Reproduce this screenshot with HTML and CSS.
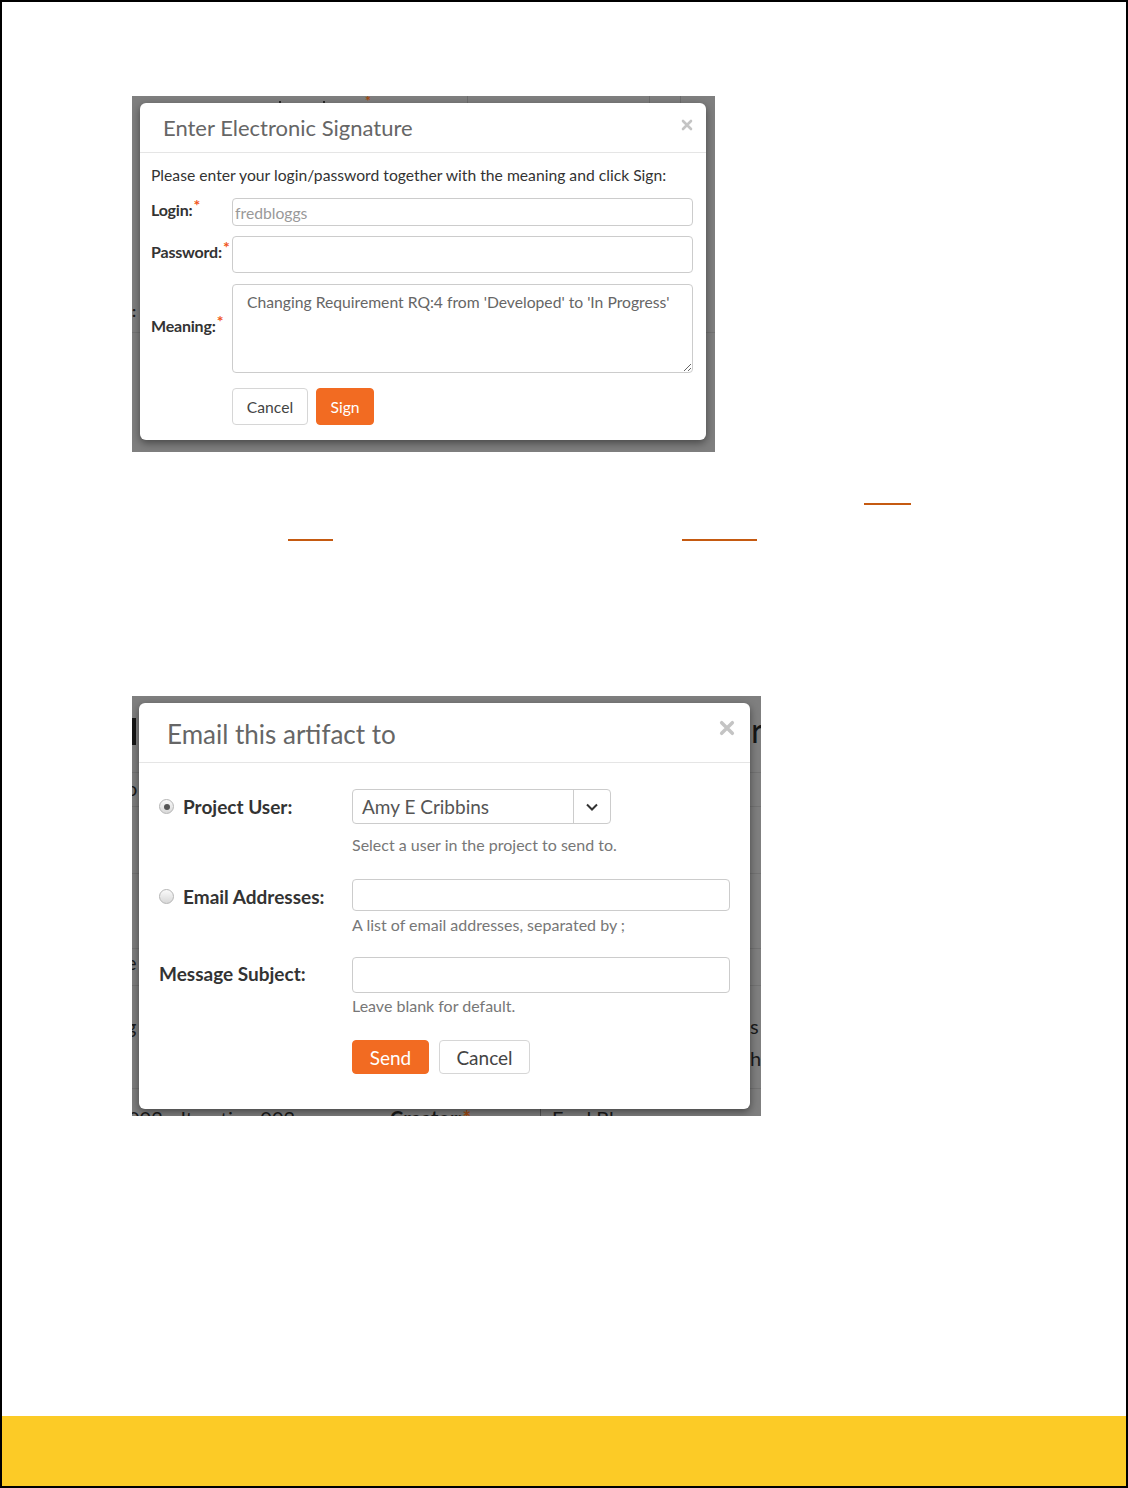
FILE: index.html
```html
<!DOCTYPE html>
<html lang="en">
<head>
  <meta charset="UTF-8">
  <meta name="viewport" content="width=device-width, initial-scale=1.0">
  <title>Electronic signature and email dialogs</title>
  <link rel="stylesheet" href="styles.css">
</head>
<body>
  <div class="page">
    <main class="content">

      <!-- screenshot 1: signature dialog -->
      <div class="shot shot-sig">
        <span class="bg-vline" style="left:335px"></span>
        <span class="bg-vline" style="left:517px"></span>
        <span class="bg-vline" style="left:548px"></span>
        <span class="bg-dot" style="left:147px"></span>
        <span class="bg-dot" style="left:191px"></span>
        <span class="bg-star" style="left:233px">*</span>
        <span class="bg-colon" style="top:205px">:</span>
        <span class="bg-hline" style="top:236px"></span>

        <div class="modal sig-modal">
          <div class="sig-head">
            <h3 class="sig-title">Enter Electronic Signature</h3>
            <svg class="close-x sig-close" viewBox="0 0 12 12"><path d="M2 2L10 10M10 2L2 10"/></svg>
          </div>
          <div class="sig-body">
            <p class="sig-intro">Please enter your login/password together with the meaning and click Sign:</p>
            <div class="sig-row">
              <label class="sig-label">Login:<sup class="req">*</sup></label>
              <input class="sig-input sig-login" type="text" placeholder="fredbloggs">
            </div>
            <div class="sig-row">
              <label class="sig-label">Password:<sup class="req">*</sup></label>
              <input class="sig-input sig-pass" type="password">
            </div>
            <div class="sig-row">
              <label class="sig-label">Meaning:<sup class="req">*</sup></label>
              <textarea class="sig-input sig-meaning">Changing Requirement RQ:4 from 'Developed' to 'In Progress'</textarea>
            </div>
            <div class="sig-actions">
              <button class="btn btn-default sig-btn">Cancel</button>
              <button class="btn btn-primary sig-btn sig-sign">Sign</button>
            </div>
          </div>
        </div>
      </div>

      <div class="rule-row rule-row-1">
        <span class="link-rule" style="margin-left:732px;width:47px"></span>
      </div>
      <div class="rule-row rule-row-2">
        <span class="link-rule" style="margin-left:156px;width:45px"></span>
        <span class="link-rule" style="margin-left:349px;width:75px"></span>
      </div>

      <!-- screenshot 2: email dialog -->
      <div class="shot shot-mail">
        <span class="bg-stem"></span>
        <span class="bg-big" style="left:619px">r</span>
        <span class="bg-hline" style="top:76px"></span>
        <span class="bg-hline" style="top:110px"></span>
        <span class="bg-hline" style="top:177px"></span>
        <span class="bg-hline" style="top:252px"></span>
        <span class="bg-hline" style="top:289px"></span>
        <span class="bg-hline" style="top:392px"></span>
        <span class="bg-side" style="left:-6px;top:80px">o</span>
        <span class="bg-side" style="left:-6px;top:254px">e</span>
        <span class="bg-side" style="left:-6px;top:318px">g</span>
        <span class="bg-side" style="left:618px;top:318px">s</span>
        <span class="bg-side" style="left:618px;top:350px">h</span>
        <span class="bg-foot" style="left:-4px">002 - Iteration 002</span>
        <span class="bg-foot bg-arrow" style="left:190px">&#9654;</span>
        <span class="bg-foot bg-creator" style="left:258px">Creator:<span class="bg-req">*</span></span>
        <span class="bg-sep" style="left:408px"></span>
        <span class="bg-foot" style="left:420px">Fred Bloggs</span>

        <div class="modal mail-modal">
          <div class="mail-head">
            <h3 class="mail-title">Email this artifact to</h3>
            <svg class="close-x mail-close" viewBox="0 0 12 12"><path d="M2 2L10 10M10 2L2 10"/></svg>
          </div>
          <div class="mail-body">
            <div class="mail-row mail-row-user">
              <label class="mail-label"><span class="radio radio-on"></span>Project User:</label>
              <div class="mail-field">
                <div class="select-box">
                  <span class="select-value">Amy E Cribbins</span>
                  <span class="select-caret">
                    <svg viewBox="0 0 14 10"><path d="M2 2.5L7 7.5L12 2.5"/></svg>
                  </span>
                </div>
                <p class="help help-user">Select a user in the project to send to.</p>
              </div>
            </div>
            <div class="mail-row mail-row-addr">
              <label class="mail-label"><span class="radio"></span>Email Addresses:</label>
              <div class="mail-field">
                <input class="mail-input mail-addr" type="text">
                <p class="help">A list of email addresses, separated by ;</p>
              </div>
            </div>
            <div class="mail-row mail-row-subj">
              <label class="mail-label">Message Subject:</label>
              <div class="mail-field">
                <input class="mail-input mail-subj" type="text">
                <p class="help">Leave blank for default.</p>
              </div>
            </div>
            <div class="mail-actions">
              <button class="btn btn-primary mail-send">Send</button>
              <button class="btn btn-default mail-cancel">Cancel</button>
            </div>
          </div>
        </div>
      </div>

    </main>
    <footer class="footer-bar"></footer>
  </div>
</body>
</html>
```

FILE: styles.css
```css
body {
  margin: 0;
  font-family: Lato, "Open Sans", sans-serif;
  background: #fff;
}
.page {
  width: 1128px;
  height: 1488px;
  box-sizing: border-box;
  border: 2px solid #000;
  display: flex;
  flex-direction: column;
}
.content {
  flex: 1;
  padding: 94px 0 0 130px;
}
.footer-bar {
  height: 70px;
  background: #fccb26;
}

/* screenshot frames with the dimmed page behind */
.shot {
  position: relative;
  overflow: hidden;
  background: #7f7f7f;
  box-sizing: border-box;
}
.shot-sig {
  width: 583px;
  height: 356px;
  padding: 7px 0 0 8px;
}
.shot-mail {
  width: 629px;
  height: 420px;
  padding: 7px 0 0 7px;
  margin-top: 155px;
}
.bg-vline {
  position: absolute;
  top: 0;
  width: 1px;
  height: 8px;
  background: #6e6e6e;
}
.bg-hline {
  position: absolute;
  left: 0;
  right: 0;
  height: 1px;
  background: #737373;
}
.bg-dot {
  position: absolute;
  top: 5px;
  width: 2px;
  height: 2px;
  background: #2a2a2a;
}
.bg-star {
  position: absolute;
  top: -4px;
  color: #a34a10;
  font-size: 14px;
  font-weight: 700;
}
.bg-colon {
  position: absolute;
  left: 0;
  color: #1a1a1a;
  font-size: 16px;
  font-weight: 700;
}
.bg-stem {
  position: absolute;
  left: 0;
  top: 22px;
  width: 4px;
  height: 27px;
  background: #161616;
}
.bg-big {
  position: absolute;
  top: 14px;
  color: #161616;
  font-size: 34px;
  line-height: 40px;
}
.bg-side {
  position: absolute;
  color: #1a1a1a;
  font-size: 20px;
  line-height: 24px;
}
.bg-foot {
  position: absolute;
  top: 410px;
  color: #1a1a1a;
  font-size: 20px;
  line-height: 24px;
  white-space: nowrap;
}
.bg-arrow { font-size: 11px; top: 416px; }
.bg-creator { font-weight: 700; }
.bg-req { color: #a34a10; }
.bg-sep {
  position: absolute;
  top: 410px;
  width: 1px;
  height: 24px;
  background: #555;
}

.modal {
  position: relative;
  z-index: 1;
  background: #fff;
  border-radius: 6px;
  box-shadow: 0 3px 8px rgba(0, 0, 0, 0.45);
  box-sizing: border-box;
}
.close-x {
  fill: none;
  stroke: #c4c4c4;
  stroke-width: 2.6;
  stroke-linecap: round;
}

/* signature dialog */
.sig-modal {
  width: 566px;
  height: 337px;
}
.sig-head {
  height: 50px;
  box-sizing: border-box;
  border-bottom: 1px solid #e5e5e5;
  display: flex;
  align-items: center;
  justify-content: space-between;
  padding: 0 13px 0 23px;
}
.sig-title {
  margin: 0;
  font-size: 22px;
  font-weight: 400;
  color: #666;
}
.sig-close {
  width: 12px;
  height: 12px;
  margin-top: -6px;
}
.sig-body {
  padding: 12px 13px 0 11px;
}
.sig-intro {
  margin: 0 0 13px;
  font-size: 15.7px;
  line-height: 20px;
  color: #333;
}
.sig-row {
  display: flex;
  align-items: center;
  margin-bottom: 10px;
}
.sig-label {
  width: 81px;
  padding-bottom: 6px;
  font-size: 16px;
  font-weight: 700;
  color: #333;
  letter-spacing: -0.2px;
}
.req {
  color: #f0561a;
  font-size: 16px;
  font-weight: 700;
  line-height: 1;
  vertical-align: top;
  position: relative;
  top: -3px;
  margin-left: 1px;
}
.sig-input {
  width: 461px;
  box-sizing: border-box;
  border: 1px solid #ccc;
  border-radius: 4px;
  font-family: inherit;
  font-size: 15.7px;
  color: #666;
}
.sig-input::placeholder { color: #999; }
.sig-login {
  height: 28px;
  padding: 2px 2px 0;
}
.sig-pass { height: 37px; }
.sig-meaning {
  height: 89px;
  padding: 8px 14px;
  resize: vertical;
  margin-top: 1px;
}
.sig-actions {
  display: flex;
  gap: 8px;
  margin: 15px 0 0 81px;
}
.btn {
  font-family: inherit;
  border-radius: 4px;
  box-sizing: border-box;
  cursor: pointer;
}
.btn-default {
  background: #fff;
  border: 1px solid #d6d6d6;
  color: #444;
}
.btn-primary {
  background: #f26b22;
  border: 1px solid #f26b22;
  color: #fff;
}
.sig-btn {
  height: 37px;
  width: 76px;
  font-size: 15.7px;
}
.sig-sign { width: 58px; }

/* email dialog */
.mail-modal {
  width: 611px;
  height: 406px;
}
.mail-head {
  height: 60px;
  box-sizing: border-box;
  border-bottom: 1px solid #e5e5e5;
  display: flex;
  align-items: center;
  justify-content: space-between;
  padding: 3px 15px 0 28px;
}
.mail-title {
  margin: 0;
  font-size: 26px;
  font-weight: 400;
  color: #666;
}
.mail-close {
  width: 16px;
  height: 16px;
  margin-top: -13px;
}
.mail-body {
  padding: 26px 20px 0;
}
.mail-row {
  display: flex;
  margin-bottom: 24px;
}
.mail-row-addr { margin-bottom: 22px; }
.mail-label {
  width: 193px;
  height: 35px;
  display: flex;
  align-items: center;
  font-size: 19px;
  font-weight: 700;
  color: #333;
}
.mail-row-addr .mail-label { height: 35px; }
.mail-row-subj .mail-label { height: 33px; }
.radio {
  width: 15px;
  height: 15px;
  border-radius: 50%;
  border: 1px solid #b5b5b5;
  background: linear-gradient(#fafafa, #d8d8d8);
  margin: 0 9px 0 0;
  display: flex;
  align-items: center;
  justify-content: center;
  box-sizing: border-box;
}
.radio-on::after {
  content: "";
  width: 6px;
  height: 6px;
  border-radius: 50%;
  background: #555;
}
.mail-field {
  width: 378px;
}
.select-box {
  width: 259px;
  height: 35px;
  box-sizing: border-box;
  border: 1px solid #ccc;
  border-radius: 4px;
  display: flex;
  align-items: center;
}
.select-value {
  flex: 1;
  padding-left: 9px;
  font-size: 19px;
  color: #555;
}
.select-caret {
  width: 36px;
  height: 100%;
  border-left: 1px solid #ccc;
  display: flex;
  align-items: center;
  justify-content: center;
}
.select-caret svg {
  width: 14px;
  height: 10px;
  fill: none;
  stroke: #333;
  stroke-width: 2;
}
.mail-input {
  display: block;
  width: 378px;
  box-sizing: border-box;
  border: 1px solid #ccc;
  border-radius: 4px;
}
.mail-addr { height: 32px; }
.mail-subj { height: 36px; }
.help {
  margin: 4px 0 0;
  font-size: 16px;
  line-height: 20px;
  color: #777;
}
.help-user { margin-top: 11px; }
.mail-row-subj .help { margin-top: 3px; }
.mail-actions {
  display: flex;
  gap: 10px;
  margin-left: 193px;
  margin-top: 24px;
}
.mail-actions .btn {
  height: 34px;
  font-size: 19px;
}
.mail-send { width: 77px; }
.mail-cancel { width: 91px; }

/* orphaned link underlines between the screenshots */
.rule-row {
  display: flex;
  height: 2px;
}
.rule-row-1 { margin-top: 51px; }
.rule-row-2 { margin-top: 34px; }
.link-rule {
  height: 2px;
  background: #c55a11;
}
```
